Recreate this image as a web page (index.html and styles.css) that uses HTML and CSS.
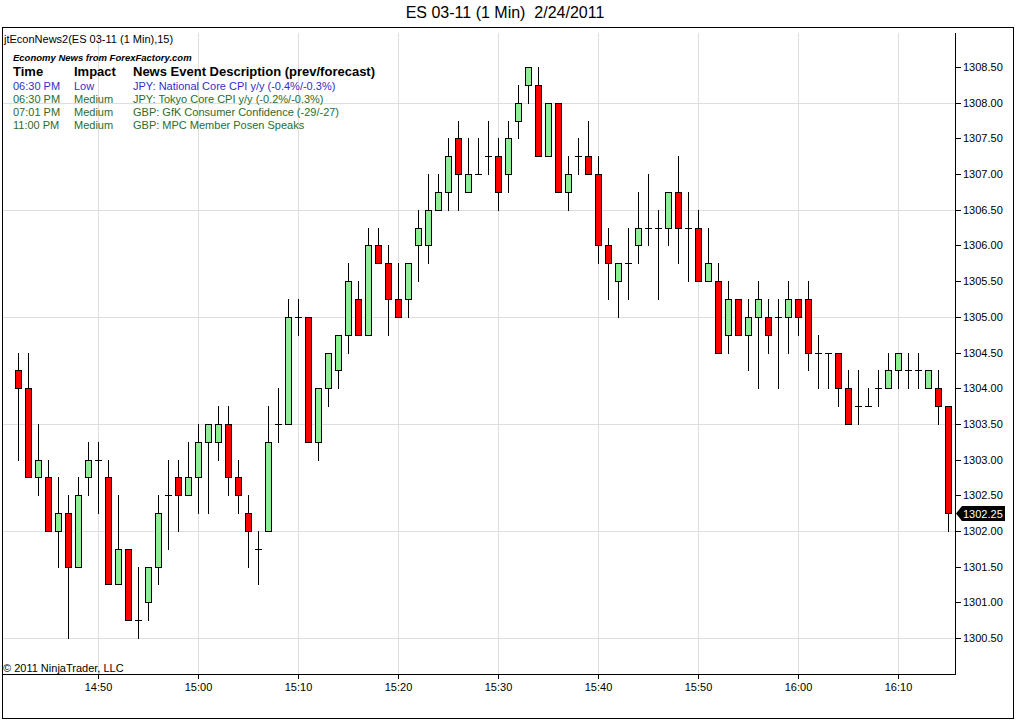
FILE: index.html
```
<!DOCTYPE html>
<html>
<head>
<meta charset="utf-8">
<title>ES 03-11 (1 Min)</title>
<link rel="stylesheet" href="styles.css">
</head>
<body>
<div class="title">ES 03-11 (1 Min)  2/24/2011</div>
<div class="frame">
  <svg id="chart" class="chart" width="1010" height="690" viewBox="3 28 1010 690" xmlns="http://www.w3.org/2000/svg"></svg>
  <div class="legend">
    <div class="ind-name">jtEconNews2(ES 03-11 (1 Min),15)</div>
    <div class="news">
      <div class="news-title">Economy News from ForexFactory.com</div>
      <div class="news-grid">
        <div class="hd">Time</div><div class="hd">Impact</div><div class="hd">News Event Description (prev/forecast)</div>
        <div class="low">06:30 PM</div><div class="low">Low</div><div class="low">JPY: National Core CPI y/y (-0.4%/-0.3%)</div>
        <div class="med">06:30 PM</div><div class="med">Medium</div><div class="med">JPY: Tokyo Core CPI y/y (-0.2%/-0.3%)</div>
        <div class="med">07:01 PM</div><div class="med">Medium</div><div class="med">GBP: GfK Consumer Confidence (-29/-27)</div>
        <div class="med">11:00 PM</div><div class="med">Medium</div><div class="med">GBP: MPC Member Posen Speaks</div>
      </div>
    </div>
  </div>
  <div class="copyright">© 2011 NinjaTrader, LLC</div>
</div>
<script src="script.js"></script>
</body>
</html>
```
FILE: styles.css
```
html, body {
  margin: 0;
  padding: 0;
  background: #ffffff;
}
body {
  width: 1016px;
  height: 720px;
  overflow: hidden;
  font-family: "Liberation Sans", Arial, sans-serif;
  color: #000;
}
.title {
  height: 27px;
  line-height: 26px;
  font-size: 16px;
  text-align: center;
  padding-right: 6px;
  white-space: pre;
}
.frame {
  position: relative;
  box-sizing: border-box;
  margin-left: 2px;
  width: 1012px;
  height: 692px;
  border: 1px solid #000;
}
.chart {
  display: block;
}
.chart .axis-label {
  font-family: "Liberation Sans", Arial, sans-serif;
  font-size: 11px;
  fill: #000;
}
.chart .tag-label {
  font-family: "Liberation Sans", Arial, sans-serif;
  font-size: 11px;
  fill: #fff;
}
.legend {
  position: absolute;
  left: 1px;
  top: 5px;
}
.ind-name {
  font-size: 11px;
  line-height: 13px;
  white-space: pre;
}
.news {
  margin-left: 9px;
}
.news-title {
  margin-top: 6px;
  font-size: 9.5px;
  line-height: 12px;
  font-weight: bold;
  font-style: italic;
}
.news-grid {
  display: grid;
  grid-template-columns: 61px 59px auto;
  font-size: 11px;
  line-height: 13px;
  white-space: nowrap;
}
.news-grid .hd {
  font-size: 13px;
  line-height: 16px;
  font-weight: bold;
}
.news-grid .low {
  color: #3030c8;
}
.news-grid .med {
  color: #2c6c2c;
}
.copyright {
  position: absolute;
  left: 0;
  top: 634px;
  font-size: 11px;
  line-height: 13px;
}
```
FILE: script.js
```
(function () {
  var NS = 'http://www.w3.org/2000/svg';
  var svg = document.getElementById('chart');
  var data = [
    [1304.25,1304.5,1303.0,1304.0],
    [1304.0,1304.5,1302.75,1302.75],
    [1302.75,1303.5,1302.5,1303.0],
    [1302.75,1303.0,1302.0,1302.0],
    [1302.0,1302.75,1301.5,1302.25],
    [1302.25,1302.5,1300.5,1301.5],
    [1301.5,1302.75,1301.5,1302.5],
    [1302.75,1303.25,1302.5,1303.0],
    [1303.0,1303.25,1302.25,1303.0],
    [1302.75,1303.0,1301.25,1301.25],
    [1301.25,1302.5,1301.25,1301.75],
    [1301.75,1301.75,1300.75,1300.75],
    [1300.75,1301.5,1300.5,1300.75],
    [1301.0,1301.5,1300.75,1301.5],
    [1301.5,1302.5,1301.25,1302.25],
    [1302.5,1303.0,1301.75,1302.5],
    [1302.75,1303.0,1302.0,1302.5],
    [1302.5,1303.25,1302.5,1302.75],
    [1302.75,1303.5,1302.25,1303.25],
    [1303.25,1303.5,1302.25,1303.5],
    [1303.25,1303.75,1303.0,1303.5],
    [1303.5,1303.75,1302.5,1302.75],
    [1302.75,1303.0,1302.25,1302.5],
    [1302.25,1302.5,1301.5,1302.0],
    [1301.75,1302.0,1301.25,1301.75],
    [1302.0,1303.75,1302.0,1303.25],
    [1303.5,1304.0,1303.25,1303.5],
    [1303.5,1305.25,1303.5,1305.0],
    [1305.0,1305.25,1304.75,1305.0],
    [1305.0,1305.0,1303.25,1303.25],
    [1303.25,1304.0,1303.0,1304.0],
    [1304.0,1304.5,1303.75,1304.5],
    [1304.25,1304.75,1304.0,1304.75],
    [1304.75,1305.75,1304.5,1305.5],
    [1305.25,1305.5,1304.75,1304.75],
    [1304.75,1306.25,1304.75,1306.0],
    [1306.0,1306.25,1305.75,1305.75],
    [1305.75,1306.0,1304.75,1305.25],
    [1305.25,1305.75,1305.0,1305.0],
    [1305.25,1305.75,1305.0,1305.75],
    [1306.0,1306.5,1305.5,1306.25],
    [1306.0,1307.0,1305.75,1306.5],
    [1306.5,1307.0,1306.5,1306.75],
    [1306.75,1307.5,1306.5,1307.25],
    [1307.5,1307.75,1306.5,1307.0],
    [1306.75,1307.5,1306.75,1307.0],
    [1307.0,1307.5,1307.0,1307.0],
    [1307.25,1307.75,1307.0,1307.25],
    [1307.25,1307.5,1306.5,1306.75],
    [1307.0,1307.75,1306.75,1307.5],
    [1307.75,1308.25,1307.5,1308.0],
    [1308.25,1308.5,1308.0,1308.5],
    [1308.25,1308.5,1307.25,1307.25],
    [1307.25,1308.0,1307.25,1308.0],
    [1308.0,1308.0,1306.75,1306.75],
    [1306.75,1307.25,1306.5,1307.0],
    [1307.25,1307.5,1307.0,1307.25],
    [1307.25,1307.75,1307.0,1307.0],
    [1307.0,1307.25,1305.75,1306.0],
    [1306.0,1306.25,1305.25,1305.75],
    [1305.5,1305.75,1305.0,1305.75],
    [1305.75,1306.25,1305.25,1305.75],
    [1306.0,1306.75,1305.75,1306.25],
    [1306.25,1307.0,1306.0,1306.25],
    [1306.25,1306.5,1305.25,1306.25],
    [1306.25,1306.75,1306.0,1306.75],
    [1306.75,1307.25,1305.75,1306.25],
    [1306.25,1306.75,1305.5,1306.25],
    [1306.25,1306.5,1305.5,1305.5],
    [1305.5,1306.25,1305.5,1305.75],
    [1305.5,1305.75,1304.5,1304.5],
    [1304.75,1305.5,1304.5,1305.25],
    [1305.25,1305.25,1304.75,1304.75],
    [1304.75,1305.25,1304.25,1305.0],
    [1305.0,1305.5,1304.0,1305.25],
    [1305.0,1305.25,1304.5,1304.75],
    [1305.0,1305.25,1304.0,1305.0],
    [1305.0,1305.5,1304.5,1305.25],
    [1305.25,1305.25,1304.75,1305.0],
    [1305.25,1305.5,1304.25,1304.5],
    [1304.5,1304.75,1304.0,1304.5],
    [1304.5,1304.5,1304.0,1304.5],
    [1304.5,1304.5,1303.75,1304.0],
    [1304.0,1304.25,1303.5,1303.5],
    [1303.75,1304.25,1303.5,1303.75],
    [1303.75,1304.0,1303.75,1303.75],
    [1304.0,1304.25,1303.75,1304.0],
    [1304.0,1304.5,1304.0,1304.25],
    [1304.25,1304.5,1304.0,1304.5],
    [1304.25,1304.5,1304.0,1304.25],
    [1304.25,1304.5,1304.0,1304.25],
    [1304.0,1304.25,1304.0,1304.25],
    [1304.0,1304.25,1303.5,1303.75],
    [1303.75,1303.75,1302.0,1302.25]
  ];

  function Y(p) { return Math.round(67 + (1308.5 - p) * 71.375); }

  function rect(x, y, w, h, fill) {
    var r = document.createElementNS(NS, 'rect');
    r.setAttribute('x', x);
    r.setAttribute('y', y);
    r.setAttribute('width', w);
    r.setAttribute('height', h);
    r.setAttribute('fill', fill);
    r.setAttribute('shape-rendering', 'crispEdges');
    svg.appendChild(r);
    return r;
  }

  function text(x, y, str, cls, anchor) {
    var t = document.createElementNS(NS, 'text');
    t.setAttribute('x', x);
    t.setAttribute('y', y);
    t.setAttribute('class', cls);
    if (anchor) t.setAttribute('text-anchor', anchor);
    t.textContent = str;
    svg.appendChild(t);
    return t;
  }

  var GRID = '#dedede';
  var TOP = 33, AXIS_X = 955, AXIS_Y = 674;

  /* vertical grid lines + time labels */
  var times = ['14:50','15:00','15:10','15:20','15:30','15:40','15:50','16:00','16:10'];
  times.forEach(function (lbl, k) {
    var x = 98 + 100 * k;
    rect(x, TOP, 1, AXIS_Y - TOP, GRID);
  });

  /* horizontal grid lines */
  [1308.0, 1306.5, 1305.0, 1303.5, 1302.0, 1300.5].forEach(function (p) {
    rect(3, Y(p), AXIS_X - 3, 1, GRID);
  });

  /* axes */
  rect(AXIS_X, TOP, 1, AXIS_Y - TOP + 1, '#000');
  rect(3, AXIS_Y, AXIS_X - 2, 1, '#000');

  /* time ticks and labels */
  times.forEach(function (lbl, k) {
    var x = 98 + 100 * k;
    rect(x, AXIS_Y + 1, 1, 4, '#000');
    text(x + 0.5, 691, lbl, 'axis-label', 'middle');
  });

  /* price ticks and labels */
  for (var i = 0; i <= 16; i++) {
    var p = 1308.5 - i * 0.5;
    var y = Y(p);
    rect(AXIS_X + 1, y, 5, 1, '#000');
    text(963, y + 4, p.toFixed(2), 'axis-label');
  }

  /* candles */
  data.forEach(function (d, i) {
    var o = d[0], h = d[1], l = d[2], c = d[3];
    var cx = 18 + 10 * i;
    var yh = Y(h), yl = Y(l);
    if (yl > yh) rect(cx, yh, 1, yl - yh + 1, '#000');
    if (o === c) {
      rect(cx - 3, Y(o), 7, 1, '#000');
    } else {
      var yt = Y(Math.max(o, c)), yb = Y(Math.min(o, c));
      rect(cx - 3, yt, 7, yb - yt + 1, '#000');
      rect(cx - 2, yt + 1, 5, yb - yt - 1, c > o ? '#90ee90' : '#ff0000');
    }
  });

  /* last price tag */
  var last = data[data.length - 1][3];
  var ly = Y(last);
  var poly = document.createElementNS(NS, 'polygon');
  poly.setAttribute('points',
    '956,' + (ly + 0.5) + ' 962,' + (ly - 7) + ' 1005,' + (ly - 7) + ' 1005,' + (ly + 8) + ' 962,' + (ly + 8));
  poly.setAttribute('fill', '#000');
  svg.appendChild(poly);
  text(963, ly + 4.5, last.toFixed(2), 'tag-label');
})();
```
